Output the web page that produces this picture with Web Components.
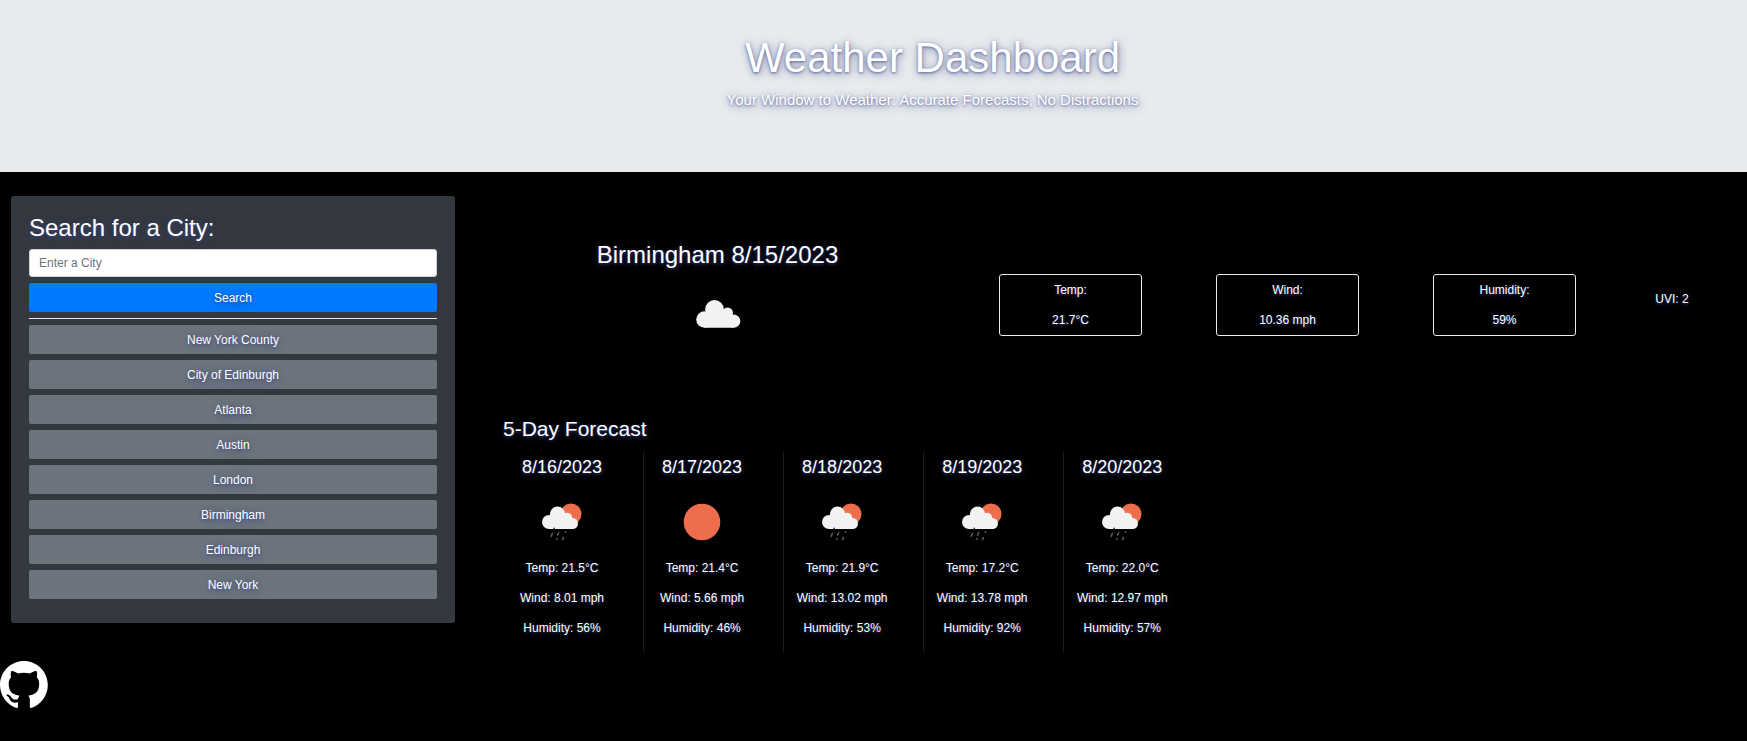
<!DOCTYPE html>
<html lang="en">
<head>
<meta charset="utf-8">
<title>Weather Dashboard</title>
<style>
  html { background: #000; }
  body {
    margin: 0;
    background: #000;
    color: #fff;
    font: 12px/18px "Liberation Sans", Arial, sans-serif;
    text-shadow: 0 1px 3px rgba(58, 72, 140, .75), 1px 2px 8px rgba(58, 62, 125, .6);
  }
</style>
</head>
<body>
<weather-app></weather-app>

<script>
const define = (name, html, setup) => {
  const template = document.createElement('template');
  template.innerHTML = html;
  customElements.define(name, class extends HTMLElement {
    connectedCallback() {
      if (this.shadowRoot) return;
      const root = this.attachShadow({ mode: 'open' });
      root.append(template.content.cloneNode(true));
      if (setup) setup(this, root);
    }
  });
};

const cloud = `
  <circle cx="12" cy="25" r="7"/><circle cx="20.500" cy="17" r="7.600"/>
  <circle cx="30.200" cy="20.700" r="5"/><circle cx="35.500" cy="26.500" r="5.500"/>
  <path d="M12 20h18l6 6v6H12z"/>`;
const drawings = {
  cloudy: `<g fill="#f2f2f0"><circle cx="11.500" cy="31.500" r="8.300"/><circle cx="21.500" cy="21.300" r="9.300"/>
    <circle cx="34.500" cy="25" r="5.500"/><circle cx="40.700" cy="33.200" r="6.600"/>
    <path d="M11.500 26l22-3 7 6v10.800h-29z"/></g>`,
  sun: `<circle cx="25" cy="25" r="18.300" fill="#ec6e4c"/>`,
  rain: `<circle cx="34" cy="17" r="10.500" fill="#ec6e4c"/><g fill="#f2f2f2">${cloud}</g>
    <g stroke="#555" stroke-width="1.700" stroke-linecap="round">
      <path d="M15.300 36.500l-1 2.600M21.700 35.600l-1 2.400M28.500 34.800l-.2.500M19.900 41.700l-.2.400M26.400 40.600l-.8 1.800"/>
      <path stroke="#444" d="M17.200 31.300v.4"/></g>`
};

define('weather-icon', `
  <style>:host { display: block; width: 50px; height: 50px; } svg { display: block; }</style>
  <svg viewBox="0 0 50 50" width="50" height="50" aria-hidden="true"></svg>`,
  (el, root) => { root.querySelector('svg').innerHTML = drawings[el.getAttribute('kind')]; });

define('page-header', `
  <style>
    :host { display: block; background: #e7ebee; text-align: center; padding: 33px 0 60px 118px; }
    h1 { margin: 0 0 5px; font-size: 42px; line-height: 50px; font-weight: 400; }
    p { margin: 0; font-size: 15px; line-height: 24px; }
  </style>
  <h1><slot name="title"></slot></h1><p><slot></slot></p>`);

define('city-button', `
  <style>
    :host { display: block; }
    button {
      display: block; width: 100%; height: 29px; padding: 0; border: 0; border-radius: 2px;
      background: #6c757d; color: inherit; font: inherit; text-shadow: inherit; cursor: pointer;
    }
    :host([primary]) button { background: #007bff; }
  </style>
  <button type="button"><slot></slot></button>`);

define('city-search', `
  <style>
    :host { display: block; box-sizing: border-box; background: #343940; border-radius: 3px; padding: 18px 18px 24px; }
    label { display: block; font-size: 24px; line-height: 27px; margin-bottom: 8px; }
    input {
      display: block; box-sizing: border-box; width: 100%; height: 28px; padding: 0 9px;
      border: 1px solid #ced4da; border-radius: 3px; background: #fff; color: #495057;
      font: inherit; text-shadow: none; margin-bottom: 6px;
    }
    input::placeholder { color: #6c757d; opacity: 1; }
    hr { margin: 6px 0; border: 0; height: 1px; background: #e7ebee; }
    .history { display: grid; gap: 6px; }
  </style>
  <label for="city">Search for a City:</label>
  <input id="city" type="text" placeholder="Enter a City">
  <city-button primary>Search</city-button>
  <hr>
  <div class="history">
    <city-button>New York County</city-button>
    <city-button>City of Edinburgh</city-button>
    <city-button>Atlanta</city-button>
    <city-button>Austin</city-button>
    <city-button>London</city-button>
    <city-button>Birmingham</city-button>
    <city-button>Edinburgh</city-button>
    <city-button>New York</city-button>
  </div>`);

define('stat-box', `
  <style>
    :host { display: grid; gap: 12px; margin: 0 37px; padding: 6px 0; border: 1px solid #e7ebee; border-radius: 3px; text-align: center; }
  </style>
  <span><slot name="label"></slot></span><span><slot></slot></span>`);

define('current-weather', `
  <style>
    :host { display: grid; grid-template-columns: 489fr 217fr 217fr 217fr 118fr; padding: 44px 16px 0 6px; }
    .place { display: grid; justify-items: center; gap: 19px; }
    h2 { margin: 0; font-size: 24px; line-height: 29px; font-weight: 400; }
    stat-box, .uvi { align-self: start; margin-top: 34px; }
    .uvi { text-align: center; margin-top: 50px; }
  </style>
  <div class="place"><h2>Birmingham 8/15/2023</h2><weather-icon kind="cloudy"></weather-icon></div>
  <stat-box><span slot="label">Temp:</span>21.7°C</stat-box>
  <stat-box><span slot="label">Wind:</span>10.36 mph</stat-box>
  <stat-box><span slot="label">Humidity:</span>59%</stat-box>
  <div class="uvi">UVI: 2</div>`);

define('forecast-card', `
  <style>
    :host {
      display: grid; justify-items: center; box-sizing: border-box; margin-right: 23px;
      padding: 5px 0 10px; border-left: 1px solid #1c1c1c; border-radius: 3px;
    }
    :host(:first-of-type) { border-left-color: transparent; }
    h4 { margin: 0 0 19px; font-size: 18px; line-height: 22px; font-weight: 400; }
    weather-icon { margin-bottom: 6px; }
    p { margin: 0; line-height: 30px; white-space: nowrap; }
  </style>
  <h4></h4><weather-icon></weather-icon>
  <p class="temp"></p><p class="wind"></p><p class="humidity"></p>`,
  (el, root) => {
    root.querySelector('h4').textContent = el.getAttribute('date');
    root.querySelector('.temp').textContent = `Temp: ${el.getAttribute('temp')}°C`;
    root.querySelector('.wind').textContent = `Wind: ${el.getAttribute('wind')} mph`;
    root.querySelector('.humidity').textContent = `Humidity: ${el.getAttribute('humidity')}%`;
    const old = root.querySelector('weather-icon');
    const icon = document.createElement('weather-icon');
    icon.setAttribute('kind', el.getAttribute('kind'));
    old.replaceWith(icon);
  });

define('five-day-forecast', `
  <style>
    :host { display: block; padding-left: 36px; margin-top: 78px; }
    h3 { margin: 0 0 10px; font-size: 21px; line-height: 25px; font-weight: 400; }
    .cards { display: grid; grid-template-columns: repeat(5, 280fr) 1087fr; }
  </style>
  <h3>5-Day Forecast</h3>
  <div class="cards">
    <forecast-card date="8/16/2023" kind="rain" temp="21.5" wind="8.01" humidity="56"></forecast-card>
    <forecast-card date="8/17/2023" kind="sun" temp="21.4" wind="5.66" humidity="46"></forecast-card>
    <forecast-card date="8/18/2023" kind="rain" temp="21.9" wind="13.02" humidity="53"></forecast-card>
    <forecast-card date="8/19/2023" kind="rain" temp="17.2" wind="13.78" humidity="92"></forecast-card>
    <forecast-card date="8/20/2023" kind="rain" temp="22.0" wind="12.97" humidity="57"></forecast-card>
  </div>`);

define('github-link', `
  <style>:host { display: block; } a { display: inline-block; } svg { display: block; }</style>
  <a href="#" aria-label="GitHub"><svg width="48" height="48" viewBox="0 0 98 98" fill="#fff"><path fill-rule="evenodd" clip-rule="evenodd" d="M48.854 0C21.839 0 0 22 0 49.217c0 21.756 13.993 40.172 33.405 46.690 2.427.490 3.316-1.059 3.316-2.362 0-1.141-.080-5.052-.080-9.127-13.590 2.934-16.420-5.867-16.420-5.867-2.184-5.704-5.420-7.170-5.420-7.170-4.448-3.015.324-3.015.324-3.015 4.934.326 7.523 5.052 7.523 5.052 4.367 7.496 11.404 5.378 14.235 4.074.404-3.178 1.699-5.378 3.074-6.600-10.839-1.141-22.243-5.378-22.243-24.283 0-5.378 1.940-9.778 5.014-13.200-.485-1.222-2.184-6.275.486-13.038 0 0 4.125-1.304 13.426 5.052a46.970 46.970 0 0 1 12.214-1.630c4.125 0 8.330.571 12.213 1.630 9.302-6.356 13.427-5.052 13.427-5.052 2.670 6.763.970 11.816.485 13.038 3.155 3.422 5.015 7.822 5.015 13.200 0 18.905-11.404 23.060-22.324 24.283 1.780 1.548 3.316 4.481 3.316 9.126 0 6.600-.080 11.897-.080 13.526 0 1.304.890 2.853 3.316 2.364 19.412-6.520 33.405-24.935 33.405-46.691C97.707 22 75.788 0 48.854 0z"/></svg></a>`);

define('weather-app', `
  <style>
    :host { display: block; }
    .layout { display: grid; grid-template-columns: minmax(0, 444fr) minmax(0, 1280fr); gap: 12px; align-items: start; padding: 24px 0 8px 11px; }
  </style>
  <page-header><span slot="title">Weather Dashboard</span>Your Window to Weather: Accurate Forecasts, No Distractions</page-header>
  <div class="layout">
    <city-search></city-search>
    <main><current-weather></current-weather><five-day-forecast></five-day-forecast></main>
  </div>
  <github-link></github-link>`);
</script>
</body>
</html>
